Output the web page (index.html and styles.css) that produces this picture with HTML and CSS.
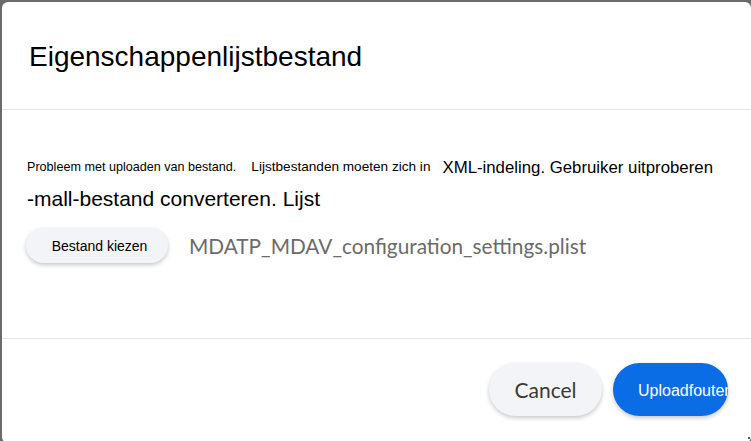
FILE: index.html
```html
<!DOCTYPE html>
<html lang="nl">
<head>
<meta charset="utf-8">
<title>Eigenschappenlijstbestand</title>
<link rel="stylesheet" href="styles.css">
</head>
<body>
<div class="dialog">
  <header class="dialog-header">
    <h1 class="title">Eigenschappenlijstbestand</h1>
  </header>
  <main class="dialog-body">
    <p class="message"><span class="msg-a">Probleem met uploaden van bestand.</span><span class="msg-b">Lijstbestanden moeten zich in</span><span class="msg-c">XML-indeling. Gebruiker uitproberen</span> <span class="nowrap">-mall-bestand</span> converteren. Lijst</p>
    <div class="file-row">
      <button class="choose-btn" type="button">Bestand kiezen</button>
      <span class="file-name">MDATP_MDAV_configuration_settings.plist</span>
    </div>
  </main>
  <footer class="dialog-footer">
    <button class="btn btn-cancel" type="button">Cancel</button>
    <button class="btn btn-primary" type="button"><span class="btn-label">Uploadfouten</span></button>
  </footer>
  <span class="resize-grip"></span>
</div>
</body>
</html>
```
FILE: styles.css
```css
html, body {
  margin: 0;
  padding: 0;
  width: 751px;
  height: 441px;
  overflow: hidden;
  background: #6b6b6b;
}

body {
  font-family: "Liberation Sans", Arial, sans-serif;
  color: #000;
}

.dialog {
  position: relative;
  margin: 2px 0 0 2px;
  width: 749px;
  height: 441px;
  background: #fff;
  border-radius: 6px;
  display: flex;
  flex-direction: column;
  box-sizing: border-box;
}

.dialog-header {
  height: 108px;
  box-sizing: border-box;
  padding: 39px 27px 0;
  border-bottom: 1px solid #e3e3e3;
}

.title {
  margin: 0;
  font-weight: 400;
  font-size: 28px;
  line-height: 32px;
  color: #000;
}

.dialog-body {
  height: 229px;
  box-sizing: border-box;
  padding: 40px 25px 0;
  border-bottom: 1px solid #e3e3e3;
}

.message {
  margin: 0;
  font-size: 21px;
  line-height: 31px;
  color: #000;
}

.msg-a {
  font-size: 12.6px;
  vertical-align: 2px;
  margin-right: 15px;
}

.msg-b {
  font-size: 13.6px;
  vertical-align: 2px;
  margin-right: 12px;
}

.msg-c {
  font-size: 16.8px;
}

.nowrap {
  white-space: nowrap;
}

.file-row {
  display: flex;
  align-items: center;
  gap: 21px;
  margin-top: 14px;
}

.choose-btn {
  width: 142px;
  height: 35px;
  border: none;
  border-radius: 18px;
  background: #f3f4f7;
  box-shadow: 0 2px 4px rgba(0, 0, 0, 0.22);
  font-family: "Liberation Sans", Arial, sans-serif;
  font-size: 14px;
  color: #000;
  padding: 0 0 0 5px;
  margin-left: -1px;
}

.file-name {
  font-family: Lato, "Open Sans", sans-serif;
  font-size: 20.8px;
  color: #6b6b6b;
}

.dialog-footer {
  flex: 1;
  display: flex;
  justify-content: flex-end;
  align-items: flex-start;
  gap: 11px;
  padding: 24px 23px 0 0;
}

.btn {
  height: 53px;
  border: none;
  border-radius: 27px;
  padding: 0;
  box-shadow: 0 2px 4px rgba(0, 0, 0, 0.22);
}

.btn-cancel {
  width: 113px;
  background: #f3f4f7;
  font-family: Lato, "Open Sans", sans-serif;
  font-size: 21px;
  color: #3a3a3a;
}

.btn-primary {
  width: 115px;
  background: #0a6de6;
  color: #fff;
  font-family: "Liberation Sans", Arial, sans-serif;
  font-size: 16px;
  text-align: left;
  padding-left: 25px;
  overflow: hidden;
  white-space: nowrap;
}

.btn-label {
  display: block;
  margin-top: 2px;
}

.resize-grip {
  position: absolute;
  right: 1px;
  bottom: 4px;
  width: 2px;
  height: 2px;
  background: #555;
}
```
